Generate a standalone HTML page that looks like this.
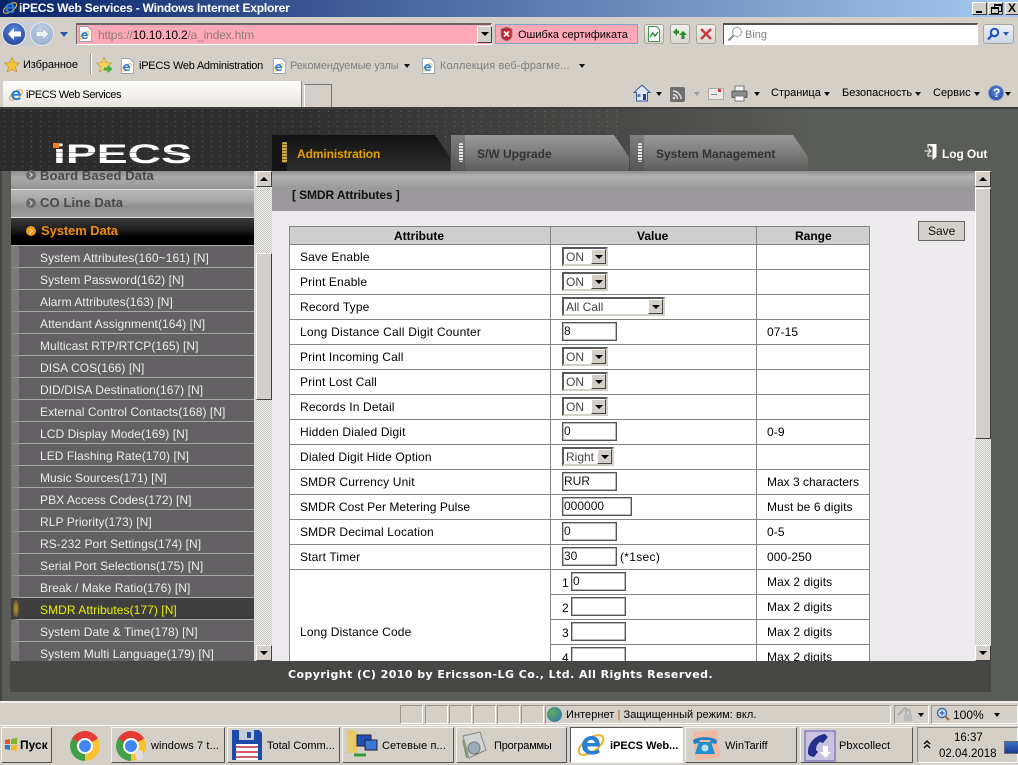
<!DOCTYPE html>
<html><head><meta charset="utf-8"><title>iPECS Web Services</title>
<style>
html,body{margin:0;padding:0;background:#d4d0c8}
#r{position:relative;width:1018px;height:765px;overflow:hidden;background:#d4d0c8;font:12px/14px "Liberation Sans","Noto Sans CJK SC",sans-serif;color:#000}
#r div,#r span.a,#r svg{position:absolute}
.t{position:absolute;white-space:nowrap;line-height:14px}
.g{color:#808080}
.c{font-size:11px}
.ar{width:0;height:0;border-left:3.5px solid transparent;border-right:3.5px solid transparent;border-top:4px solid #111}
.m{left:11px;width:227px;height:21px;padding-left:8px;background:#636163;border-left:8px solid #7b797b;border-bottom:1px solid #a8a8a8}
.m b{position:absolute;left:21px;top:5px;font-weight:normal;color:#eee;white-space:nowrap;line-height:14px;letter-spacing:.06px}
.l{color:#000;left:300px;letter-spacing:.15px}
.v{left:767px;letter-spacing:.1px}
.h{height:1px;left:289px;width:581px;background:#858585}
.sel{left:562px;width:42px;height:15px;background:#fff;border:2px solid;border-color:#5a5a5a #d4d0c8 #d4d0c8 #5a5a5a;box-sizing:content-box}
.sel i{position:absolute;left:2px;top:1px;font-style:normal;color:#444;line-height:15px}
.sel u{position:absolute;right:0;top:0;width:15px;height:15px;background:#d4d0c8;box-sizing:border-box;border:1px solid;border-color:#fff #444 #444 #fff}
.sel u:after{content:"";position:absolute;left:3px;top:5px;border-left:4px solid transparent;border-right:4px solid transparent;border-top:4px solid #000}
.inp{background:#fff;border:1px solid #555;box-shadow:inset 0 0 0 .5px #777;height:17px;line-height:17px;padding-left:1px;color:#111;box-sizing:content-box}
.btn3{width:16px;height:16px;background:#d4d0c8;box-sizing:border-box;border:1px solid;border-color:#fff #404040 #404040 #fff}
.up:after,.dn:after{content:"";position:absolute;left:3px;border-left:4px solid transparent;border-right:4px solid transparent}
.up:after{top:5px;border-bottom:4px solid #000}
.dn:after{top:5px;border-top:4px solid #000}
.trk{background-color:#eee;background-image:linear-gradient(45deg,#c8c6c0 25%,transparent 25%,transparent 75%,#c8c6c0 75%),linear-gradient(45deg,#c8c6c0 25%,transparent 25%,transparent 75%,#c8c6c0 75%);background-size:2px 2px;background-position:0 0,1px 1px}
.tb{top:727px;height:36px;background:#d4d0c8;box-sizing:border-box;border:1px solid;border-color:#f4f4f0 #555 #555 #f4f4f0}
.cell{top:705px;height:17px;width:21px;border:1px solid;border-color:#9a968e #fff #fff #9a968e}
.cb{width:20px;height:20px;top:24px;border:1px solid #a9a69e;border-radius:3px;background:linear-gradient(#f2f1ee,#d8d6d0);box-sizing:border-box}
.tab{top:135px;width:178px;height:36px;background:linear-gradient(#9a9a9a,#7c7c7c 50%,#5e5e5e);clip-path:polygon(0 0,163px 0,178px 22px,178px 36px,0 36px)}
.tabL{top:135px;width:14px;height:36px;background:linear-gradient(#808080,#555)}
.tt{top:147px;font-weight:bold;color:#333}
.dash{top:143px;width:4px;height:19px;border-radius:2px;background:repeating-linear-gradient(#e4e4e4 0 2px,#777 2px 3px)}
.chev{width:10px;height:10px;border-radius:50%;background:#6a6a6a}
.chev:after{content:"";position:absolute;left:2px;top:3px;width:3px;height:3px;border-top:1px solid #ddd;border-right:1px solid #ddd;transform:rotate(45deg)}
.chrome{border-radius:50%;background:conic-gradient(from 60deg,#fbc02d 0 120deg,#43a047 120deg 240deg,#e53935 240deg 360deg)}
.chrome:after{content:"";position:absolute;left:29%;top:29%;width:42%;height:42%;border-radius:50%;background:#4285f4;box-shadow:0 0 0 2px #fff}
</style></head>
<body><div id="r">
<svg width="0" height="0" style="left:0;top:0"><defs>
<symbol id="e" viewBox="0 0 20 20"><ellipse cx="10" cy="10" rx="9.5" ry="4.5" transform="rotate(-35 10 10)" fill="none" stroke="#e8b53a" stroke-width="1.4"/><path d="M4 10.500C4 6.500 7 4 10.500 4S16 6.500 16 11H7.500c.2 3.500 5 4 7.500 1.500l.8 2.300C12 18 4 16.500 4 10.500ZM7.500 8.700h5.200c-.3-2.700-4.700-2.900-5.200 0Z" fill="#2a7fd6"/></symbol>
<symbol id="p" viewBox="0 0 16 17"><path d="M1.500.5h9l4 4v12h-13z" fill="#fff" stroke="#9aa3ad"/><use href="#e" x="1" y="4" width="12" height="12"/></symbol>
</defs></svg>

<!-- title bar -->
<div style="left:0;top:0;width:1018px;height:17px;background:linear-gradient(90deg,#0a246a,#a6caf0)"></div>
<svg style="left:2px;top:0" width="16" height="16"><use href="#e" width="16" height="16"/></svg>
<div class="t" style="left:19px;top:1px;color:#fff;font-weight:bold;font-size:12px;letter-spacing:-.2px">iPECS Web Services - Windows Internet Explorer</div>
<div class="btn3" style="left:972px;top:2px;width:15px;height:13px"><div style="left:3px;top:8px;width:6px;height:2px;background:#000"></div></div>
<div class="btn3" style="left:988px;top:2px;width:15px;height:13px"><div style="left:5px;top:1px;width:6px;height:5px;border:1px solid #000;border-top-width:2px"></div><div style="left:2px;top:4px;width:6px;height:4px;border:1px solid #000;border-top-width:2px;background:#d4d0c8"></div></div>
<div class="btn3" style="left:1005px;top:2px;width:15px;height:13px"><div class="t" style="left:2px;top:-2px;font:bold 12px/14px 'Liberation Sans'">X</div></div>

<!-- address row -->
<div style="left:2px;top:22px;width:52px;height:24px;border-radius:12px;background:#c9cdd2"></div>
<div style="left:2px;top:22px;width:24px;height:24px;border-radius:50%;background:radial-gradient(circle at 50% 35%,#5a86d8,#1a3a90);border:1px solid #e5e8ee;box-sizing:border-box"></div>
<svg style="left:7px;top:27px" width="15" height="14"><path d="M7 1 1 7l6 6V9.500h7v-5H7z" fill="#fff"/></svg>
<div style="left:30px;top:22px;width:24px;height:24px;border-radius:50%;background:radial-gradient(circle at 50% 35%,#c6d4e8,#8fa6c6);border:1px solid #e5e8ee;box-sizing:border-box"></div>
<svg style="left:35px;top:27px" width="15" height="14"><path d="M8 1l6 6-6 6V9.500H1v-5h7z" fill="#eef1f6" stroke="#8fa0ba" stroke-width=".6"/></svg>
<div style="left:60px;top:32px;width:0;height:0;border-left:4px solid transparent;border-right:4px solid transparent;border-top:5px solid #2a5aa8"></div>

<div style="left:76px;top:23px;width:416px;height:22px;background:#ffa9b8;box-sizing:border-box;border:1px solid;border-color:#666 #fff #fff #666;border-top-width:2px"></div>
<svg style="left:78px;top:26px" width="15" height="16"><use href="#p" width="15" height="16"/></svg>
<div class="t" style="left:98px;top:28px;letter-spacing:-.18px"><span style="color:#8c7c80">https://</span>10.10.10.2<span style="color:#8c7c80">/a_index.htm</span></div>
<div class="btn3 dn" style="left:477px;top:26px;width:15px;height:17px"></div>

<div style="left:495px;top:24px;width:143px;height:20px;background:#ffa9b8;border:1px solid #7ea6c4;box-sizing:border-box"></div>
<svg style="left:499px;top:26px" width="15" height="16"><path d="M7.500 1 13 3v6c0 3-2.500 5-5.500 6C4.500 14 2 12 2 9V3z" fill="#c8202c" stroke="#888"/><path d="M5 5.500l5 5m0-5l-5 5" stroke="#fff" stroke-width="1.800"/></svg>
<div class="t c" style="left:518px;top:28px">Ошибка сертификата</div>

<div class="cb" style="left:644px"></div>
<svg style="left:647px;top:26px" width="14" height="16"><path d="M1.500.5h8l3 3v12h-11z" fill="#fff" stroke="#3d9a4a"/><path d="M3 11l3-4 2 3 3-4" fill="none" stroke="#2c8a3c" stroke-width="1.400"/></svg>
<div class="cb" style="left:670px"></div>
<svg style="left:672px;top:27px" width="16" height="14"><path d="M1 5l4-4v2.500h2v3H5V9zM15 8l-4-4-4 4h2.500v4h3V8z" fill="#2f8a2f"/></svg>
<div class="cb" style="left:696px"></div>
<svg style="left:700px;top:28px" width="12" height="12"><path d="M1 1l10 10M11 1 1 11" stroke="#c9383a" stroke-width="2.400"/></svg>

<div style="left:723px;top:23px;width:255px;height:22px;background:#fff;box-sizing:border-box;border:1px solid;border-color:#555 #fff #fff #555;border-top-width:2px"></div>
<svg style="left:727px;top:26px" width="16" height="16"><circle cx="10" cy="6" r="4.500" fill="#fff" stroke="#99a"/><path d="M6.500 9.500 1.500 14.500" stroke="#888" stroke-width="2"/></svg>
<div class="t g" style="left:745px;top:28px;font-size:11px">Bing</div>
<div class="cb" style="left:983px;width:31px;background:linear-gradient(#edf1f7,#ced6e2)"></div>
<svg style="left:986px;top:27px" width="14" height="14"><circle cx="8.500" cy="5.500" r="3.700" fill="none" stroke="#1b50c8" stroke-width="2"/><path d="M6 8 2 12.500" stroke="#1b50c8" stroke-width="2.400"/></svg>
<div style="left:1003px;top:32px;width:0;height:0;border-left:3.500px solid transparent;border-right:3.500px solid transparent;border-top:4px solid #2a5aa8"></div>

<!-- favorites row -->
<svg style="left:4px;top:57px" width="16" height="16"><path d="M8 .5l2.300 5 5.200.6-3.900 3.600 1.100 5.300L8 12.300 3.300 15l1.100-5.300L.5 6.100l5.200-.6z" fill="#f6c23c" stroke="#b98a20" stroke-width=".6"/></svg>
<div class="t c" style="left:23px;top:58px;letter-spacing:-.1px">Избранное</div>
<div style="left:90px;top:54px;width:1px;height:20px;background:#999;border-right:1px solid #fff"></div>
<svg style="left:96px;top:57px" width="17" height="17"><path d="M8 .5l2.300 5 5.200.6-3.900 3.600 1.100 5.300L8 12.300 3.300 15l1.100-5.300L.5 6.100l5.200-.6z" fill="#f6d25c" stroke="#b98a20" stroke-width=".6"/><path d="M8 10.500h4V8l4.500 4-4.500 4v-2.500H8z" fill="#3fae3f"/></svg>
<svg style="left:120px;top:58px" width="15" height="16"><use href="#p" width="15" height="16"/></svg>
<div class="t c" style="left:139px;top:59px;letter-spacing:-.25px">iPECS Web Administration</div>
<svg style="left:272px;top:58px" width="15" height="16"><use href="#p" width="15" height="16"/></svg>
<div class="t g c" style="left:290px;top:59px;letter-spacing:-.15px">Рекомендуемые узлы</div>
<div class="ar" style="left:404px;top:64px"></div>
<svg style="left:421px;top:58px" width="15" height="16"><use href="#p" width="15" height="16"/></svg>
<div class="t g c" style="left:440px;top:59px;letter-spacing:.1px">Коллекция веб-фрагме...</div>
<div class="ar" style="left:579px;top:64px"></div>

<!-- tab row -->
<div style="left:3px;top:81px;width:298px;height:27px;background:linear-gradient(#fff,#e6e3de);border-right:1px solid #888"></div>
<svg style="left:8px;top:87px" width="16" height="16"><use href="#e" width="16" height="16"/></svg>
<div class="t c" style="left:26px;top:88px;letter-spacing:-.45px">iPECS Web Services</div>
<div style="left:304px;top:84px;width:28px;height:24px;box-sizing:border-box;border:1px solid #777;border-bottom:0;border-left-color:#fff;background:#d4d0c8"></div>

<svg style="left:633px;top:84px" width="18" height="18"><path d="M9 1 1 8.500h2.500V17h11V8.500H17z" fill="#dfe8f2" stroke="#3158a8"/><rect x="10" y="10" width="3" height="6" fill="#22417f"/><rect x="4.500" y="10" width="3" height="3" fill="#4a80c8"/></svg>
<div class="ar" style="left:656px;top:92px"></div>
<div style="left:670px;top:87px;width:15px;height:15px;background:#6f6f6f;border-radius:2px"></div>
<svg style="left:670px;top:87px" width="15" height="15"><path d="M3 4c4 0 8 4 8 8M3 7.500c2.500 0 4.500 2 4.500 4.500" fill="none" stroke="#ddd" stroke-width="1.500"/><circle cx="4" cy="11" r="1.300" fill="#ddd"/></svg>
<div class="ar" style="left:694px;top:92px;border-top-color:#999"></div>
<div style="left:708px;top:88px;width:14px;height:10px;background:#eceae6;border:1px solid #aaa"></div>
<div style="left:718px;top:89px;width:3px;height:3px;background:#d33"></div>
<div style="left:711px;top:94px;width:6px;height:1px;background:#888"></div>
<svg style="left:731px;top:85px" width="17" height="17"><rect x="4" y="1" width="9" height="6" fill="#eee" stroke="#777"/><rect x="1" y="6" width="15" height="6.500" rx="1" fill="#8a8a8a" stroke="#555"/><rect x="4" y="11" width="9" height="5" fill="#fff" stroke="#777"/></svg>
<div class="ar" style="left:754px;top:92px"></div>
<div class="t c" style="left:771px;top:86px">Страница</div>
<div class="ar" style="left:824px;top:92px"></div>
<div class="t c" style="left:842px;top:86px">Безопасность</div>
<div class="ar" style="left:915px;top:92px"></div>
<div class="t c" style="left:933px;top:86px">Сервис</div>
<div class="ar" style="left:974px;top:92px"></div>
<div style="left:988px;top:85px;width:16px;height:16px;border-radius:50%;background:radial-gradient(circle at 50% 40%,#5a8ae0,#1d3c9a);border:1px solid #8899bb;box-sizing:border-box"></div>
<div class="t" style="left:993px;top:86px;color:#fff;font-weight:bold">?</div>
<div class="ar" style="left:1005px;top:92px"></div>

<!-- page -->
<div style="left:0;top:107px;width:1018px;height:594px;background:#5a5c58"></div>
<div style="left:0;top:107px;width:1018px;height:2px;background:#3e3e3e"></div>
<div style="left:0;top:109px;width:1018px;height:62px;background:linear-gradient(90deg,#2c2c2c 0,#2f2f2f 30%,#4a4b49 62%,#5a5c58 80%)"></div>
<div style="left:0;top:109px;width:620px;height:62px;opacity:.3;background-image:radial-gradient(#aaa .7px,transparent 1px);background-size:9px 5px"></div>
<div style="left:0;top:171px;width:11px;height:490px;background:#5a5c58"></div>
<div style="left:0;top:171px;width:2px;height:530px;background:#454644"></div>

<svg style="left:50px;top:138px" width="146" height="30"><text x="3" y="25" font-family="Liberation Sans" font-weight="bold" font-size="27" fill="#fff" textLength="139" lengthAdjust="spacingAndGlyphs">iPECS</text><path d="M0 14.500h146M0 19.500h146" stroke="#2c2c2c" stroke-width=".8" opacity=".5"/><rect x="3" y="5" width="6" height="5" fill="#f47a1f"/></svg>

<!-- tabs -->
<div class="tab" style="left:272px;background:linear-gradient(#111,#2e2f2e)"></div>
<div style="left:272px;top:135px;width:15px;height:36px;background:#141414"></div>
<div style="left:282px;top:142px;width:5px;height:21px;background:repeating-linear-gradient(#d0a840 0 2px,#7a6024 2px 3px);border-radius:2px"></div>
<div class="t" style="left:297px;top:147px;color:#e8a000;font-weight:bold;letter-spacing:-.1px">Administration</div>
<div class="tab" style="left:451px"></div><div class="tabL" style="left:451px"></div>
<div class="dash" style="left:459px"></div>
<div class="t tt" style="left:477px">S/W Upgrade</div>
<div class="tab" style="left:630px"></div><div class="tabL" style="left:630px"></div>
<div class="dash" style="left:638px"></div>
<div class="t tt" style="left:656px">System Management</div>
<svg style="left:924px;top:143px" width="14" height="18"><path d="M4 1h8.500v13l-4 3V4L4 2z" fill="#fff"/><path d="M4 1v4M4 10v3h4" fill="none" stroke="#fff"/><path d="M.5 8h6M4.500 5.500l2.300 2.500-2.300 2.500" fill="none" stroke="#fff"/></svg>
<div class="t" style="left:942px;top:147px;color:#fff;font-weight:bold;letter-spacing:-.1px">Log Out</div>

<!-- sidebar -->
<div style="left:11px;top:171px;width:243px;height:18px;background:linear-gradient(#8e8e8e,#a8a8a8 35%,#a2a2a2 65%,#8f8f8f)"></div>
<div style="left:11px;top:189px;width:243px;height:1px;background:#e0e0e0"></div>
<div style="left:11px;top:190px;width:243px;height:27px;background:linear-gradient(#b8b8b8,#a5a5a5 40%,#8f8f8f 60%,#9c9c9c)"></div>
<div style="left:11px;top:217px;width:243px;height:1px;background:#ddd"></div>
<div style="left:11px;top:218px;width:243px;height:27px;background:linear-gradient(#3a3a3a,#1c1c1c 45%,#000 70%,#000)"></div>
<div class="chev" style="left:26px;top:170px"></div>
<div class="t" style="left:40px;top:169px;font-size:13px;font-weight:bold;color:#4a4a4a;letter-spacing:.12px">Board Based Data</div>
<div class="chev" style="left:26px;top:198px"></div>
<div class="t" style="left:40px;top:196px;font-size:13px;font-weight:bold;color:#4a4a4a;letter-spacing:.12px">CO Line Data</div>
<div class="chev" style="left:26px;top:226px;background:#e89a10"></div>
<div class="t" style="left:41px;top:224px;font-size:13px;font-weight:bold;color:#f08a10;letter-spacing:-.1px">System Data</div>
<div style="left:11px;top:245px;width:243px;height:1px;background:#a8a8a8"></div>

<div class="m" style="top:246px"><b>System Attributes(160~161) [N]</b></div>
<div class="m" style="top:268px"><b>System Password(162) [N]</b></div>
<div class="m" style="top:290px"><b>Alarm Attributes(163) [N]</b></div>
<div class="m" style="top:312px"><b>Attendant Assignment(164) [N]</b></div>
<div class="m" style="top:334px"><b>Multicast RTP/RTCP(165) [N]</b></div>
<div class="m" style="top:356px"><b>DISA COS(166) [N]</b></div>
<div class="m" style="top:378px"><b>DID/DISA Destination(167) [N]</b></div>
<div class="m" style="top:400px"><b>External Control Contacts(168) [N]</b></div>
<div class="m" style="top:422px"><b>LCD Display Mode(169) [N]</b></div>
<div class="m" style="top:444px"><b>LED Flashing Rate(170) [N]</b></div>
<div class="m" style="top:466px"><b>Music Sources(171) [N]</b></div>
<div class="m" style="top:488px"><b>PBX Access Codes(172) [N]</b></div>
<div class="m" style="top:510px"><b>RLP Priority(173) [N]</b></div>
<div class="m" style="top:532px"><b>RS-232 Port Settings(174) [N]</b></div>
<div class="m" style="top:554px"><b>Serial Port Selections(175) [N]</b></div>
<div class="m" style="top:576px"><b>Break / Make Ratio(176) [N]</b></div>
<div class="m" style="top:598px;background:#3f3f3f;border-left-color:#3f3f3f"><b style="color:#e8f000">SMDR Attributes(177) [N]</b></div>
<div style="left:13px;top:600px;width:6px;height:17px;border-radius:50%;background:radial-gradient(#c89a20,#3f3f3f)"></div>
<div class="m" style="top:620px"><b>System Date &amp; Time(178) [N]</b></div>
<div class="m" style="top:642px"><b>System Multi Language(179) [N]</b></div>

<!-- sidebar scrollbar -->
<div class="trk" style="left:254px;top:171px;width:18px;height:490px"></div>
<div class="btn3 up" style="left:256px;top:171px"></div>
<div class="btn3" style="left:256px;top:253px;height:147px"></div>
<div class="btn3 dn" style="left:256px;top:645px"></div>

<!-- main -->
<div style="left:272px;top:171px;width:703px;height:490px;background:#eeebee"></div>
<div style="left:272px;top:171px;width:703px;height:40px;background:linear-gradient(#8e8e8e,#b5b5b5 14%,#a5a5a5 30%,#9b999b 42%,#9b999b)"></div>
<div class="t" style="left:292px;top:188px;font-weight:bold;color:#111;letter-spacing:-.1px">[ SMDR Attributes ]</div>
<div style="left:918px;top:221px;width:47px;height:20px;box-sizing:border-box;background:#d4d0c8;border:1px solid #666"></div>
<div class="t" style="left:928px;top:224px;color:#111">Save</div>

<!-- table -->
<div style="left:289px;top:226px;width:581px;height:435px;background:#fff"></div>
<div style="left:289px;top:226px;width:581px;height:18px;background:#cecece"></div>
<div class="t" style="left:394px;top:229px;font-weight:bold">Attribute</div>
<div class="t" style="left:637px;top:229px;font-weight:bold">Value</div>
<div class="t" style="left:795px;top:229px;font-weight:bold">Range</div>
<div class="h" style="top:226px"></div><div class="h" style="top:244px"></div><div class="h" style="top:269px"></div><div class="h" style="top:294px"></div><div class="h" style="top:319px"></div><div class="h" style="top:344px"></div><div class="h" style="top:369px"></div><div class="h" style="top:394px"></div><div class="h" style="top:419px"></div><div class="h" style="top:444px"></div><div class="h" style="top:469px"></div><div class="h" style="top:494px"></div><div class="h" style="top:519px"></div><div class="h" style="top:544px"></div><div class="h" style="top:569px"></div>
<div class="h" style="top:594px;left:550px;width:320px"></div><div class="h" style="top:619px;left:550px;width:320px"></div><div class="h" style="top:644px;left:550px;width:320px"></div>
<div style="left:289px;top:226px;width:1px;height:435px;background:#858585"></div>
<div style="left:550px;top:226px;width:1px;height:435px;background:#858585"></div>
<div style="left:756px;top:226px;width:1px;height:435px;background:#858585"></div>
<div style="left:869px;top:226px;width:1px;height:435px;background:#858585"></div>

<div class="t l" style="top:250px">Save Enable</div>
<div class="t l" style="top:275px">Print Enable</div>
<div class="t l" style="top:300px">Record Type</div>
<div class="t l" style="top:325px;letter-spacing:.22px">Long Distance Call Digit Counter</div>
<div class="t l" style="top:350px">Print Incoming Call</div>
<div class="t l" style="top:375px">Print Lost Call</div>
<div class="t l" style="top:400px">Records In Detail</div>
<div class="t l" style="top:425px">Hidden Dialed Digit</div>
<div class="t l" style="top:450px">Dialed Digit Hide Option</div>
<div class="t l" style="top:475px">SMDR Currency Unit</div>
<div class="t l" style="top:500px;letter-spacing:.05px">SMDR Cost Per Metering Pulse</div>
<div class="t l" style="top:525px">SMDR Decimal Location</div>
<div class="t l" style="top:550px">Start Timer</div>
<div class="t l" style="top:625px">Long Distance Code</div>

<div class="sel" style="top:247px"><i>ON</i><u></u></div>
<div class="sel" style="top:272px"><i>ON</i><u></u></div>
<div class="sel" style="top:297px;width:99px"><i>All Call</i><u></u></div>
<div class="inp" style="left:562px;top:322px;width:52px">8</div>
<div class="sel" style="top:347px"><i>ON</i><u></u></div>
<div class="sel" style="top:372px"><i>ON</i><u></u></div>
<div class="sel" style="top:397px"><i>ON</i><u></u></div>
<div class="inp" style="left:562px;top:422px;width:52px">0</div>
<div class="sel" style="top:447px;width:48px"><i>Right</i><u></u></div>
<div class="inp" style="left:562px;top:472px;width:52px">RUR</div>
<div class="inp" style="left:562px;top:497px;width:67px">000000</div>
<div class="inp" style="left:562px;top:522px;width:52px">0</div>
<div class="inp" style="left:562px;top:547px;width:52px">30</div>
<div class="t" style="left:620px;top:550px;letter-spacing:.3px">(*1sec)</div>

<div class="t" style="left:562px;top:576px">1</div><div class="inp" style="left:571px;top:572px;width:52px">0</div>
<div class="t" style="left:562px;top:601px">2</div><div class="inp" style="left:571px;top:597px;width:52px"></div>
<div class="t" style="left:562px;top:626px">3</div><div class="inp" style="left:571px;top:622px;width:52px"></div>
<div class="t" style="left:562px;top:651px">4</div><div class="inp" style="left:571px;top:647px;width:52px"></div>

<div class="t v" style="top:325px">07-15</div>
<div class="t v" style="top:425px">0-9</div>
<div class="t v" style="top:475px;letter-spacing:0">Max 3 characters</div>
<div class="t v" style="top:500px">Must be 6 digits</div>
<div class="t v" style="top:525px">0-5</div>
<div class="t v" style="top:550px">000-250</div>
<div class="t v" style="top:575px">Max 2 digits</div>
<div class="t v" style="top:600px">Max 2 digits</div>
<div class="t v" style="top:625px">Max 2 digits</div>
<div class="t v" style="top:650px">Max 2 digits</div>

<!-- main scrollbar -->
<div class="trk" style="left:975px;top:171px;width:16px;height:490px"></div>
<div class="btn3 up" style="left:975px;top:171px"></div>
<div class="btn3" style="left:975px;top:188px;height:251px"></div>
<div class="btn3 dn" style="left:975px;top:645px"></div>

<!-- footer -->
<div style="left:10px;top:661px;width:981px;height:31px;background:#474846"></div>
<div class="t" style="left:288px;top:668px;color:#fff;font:bold 11px/14px 'DejaVu Sans',sans-serif;letter-spacing:.43px">Copyright (C) 2010 by Ericsson-LG Co., Ltd. All Rights Reserved.</div>

<!-- status bar -->
<div style="left:0;top:701px;width:1018px;height:2px;background:#f0efec"></div>
<div style="left:0;top:703px;width:1018px;height:22px;background:#d4d0c8"></div>
<div class="cell" style="left:400px"></div><div class="cell" style="left:425px"></div><div class="cell" style="left:449px"></div><div class="cell" style="left:473px"></div><div class="cell" style="left:497px"></div><div class="cell" style="left:521px"></div>
<div class="cell" style="left:545px;width:344px"></div>
<div class="cell" style="left:894px;width:33px"></div>
<div class="cell" style="left:931px;width:85px"></div>
<div style="left:547px;top:707px;width:15px;height:15px;border-radius:50%;background:radial-gradient(circle at 35% 35%,#5fae5a,#2a6ac0)"></div>
<div class="t c" style="left:566px;top:708px;letter-spacing:.05px">Интернет <span style="color:#b06010">|</span> Защищенный режим: вкл.</div>
<svg style="left:897px;top:707px" width="18" height="15"><path d="M1 8 8 1l3 3" fill="none" stroke="#aaa" stroke-width="2"/><rect x="7" y="7" width="8" height="7" fill="#bbb"/><path d="M9 7V4.500a2 2 0 0 1 4 0V7" fill="none" stroke="#aaa" stroke-width="1.500"/></svg>
<div class="ar" style="left:918px;top:713px"></div>
<svg style="left:936px;top:707px" width="14" height="15"><circle cx="6" cy="6" r="4.500" fill="#dce8f8" stroke="#3a6ab0" stroke-width="1.400"/><path d="M6 3.500v5M3.500 6h5" stroke="#2a5ab0" stroke-width="1.300"/><path d="M9.500 9.500l3.500 3.500" stroke="#a06a20" stroke-width="2"/></svg>
<div class="t" style="left:953px;top:708px">100%</div>
<div class="ar" style="left:994px;top:713px"></div>

<!-- taskbar -->
<div style="left:0;top:725px;width:1018px;height:40px;background:#d4d0c8;border-top:1px solid #f4f4f0;box-sizing:border-box"></div>
<div class="tb" style="left:1px;width:51px"></div>
<svg style="left:4px;top:738px" width="15" height="14"><path d="M1 2l5-1v5H1z" fill="#e8502a"/><path d="M7 1l6-1v6H7z" fill="#7cb52c"/><path d="M1 7h5v5l-5-1z" fill="#2e78c8"/><path d="M7 7h6v6l-6-1z" fill="#f2b92c"/></svg>
<div class="t" style="left:20px;top:738px;font-weight:bold">Пуск</div>
<div class="chrome" style="left:70px;top:731px;width:30px;height:30px"></div>
<div class="tb" style="left:111px;width:114px"></div>
<div class="chrome" style="left:116px;top:731px;width:30px;height:30px"></div>
<div style="left:135px;top:750px;width:8px;height:10px;background:#ddd;border-radius:3px"></div>
<div class="t c" style="left:151px;top:739px;letter-spacing:.1px">windows 7 t...</div>
<div class="tb" style="left:227px;width:113px"></div>
<svg style="left:231px;top:729px" width="32" height="32"><path d="M1 1h27l3 3v27H1z" fill="#1c4aa8"/><rect x="8" y="1" width="15" height="10" fill="#c8ccd4"/><rect x="16" y="3" width="4" height="6" fill="#1c4aa8"/><rect x="5" y="15" width="22" height="16" fill="#fff"/><path d="M5 18h22M5 23h22M5 28h22" stroke="#c8283c" stroke-width="1.500"/></svg>
<div class="t c" style="left:267px;top:739px">Total Comm...</div>
<div class="tb" style="left:342px;width:112px"></div>
<svg style="left:346px;top:729px" width="32" height="32"><path d="M1 1h8l2 3v20H1z" fill="#e8c868"/><rect x="11" y="6" width="14" height="11" fill="#2050b8" stroke="#223"/><rect x="19" y="11" width="12" height="10" fill="#3a78d8" stroke="#223"/><path d="M8 26h12" stroke="#2e9a3a" stroke-width="3"/></svg>
<div class="t c" style="left:382px;top:739px;letter-spacing:.1px">Сетевые п...</div>
<div class="tb" style="left:456px;width:111px"></div>
<svg style="left:460px;top:730px" width="28" height="30"><path d="M3 6 20 2l6 18-17 8z" fill="#cfd4d0" stroke="#888"/><circle cx="14" cy="18" r="6" fill="#9ab" stroke="#777"/><path d="M3 10l4 18" stroke="#7a9a70" stroke-width="2"/></svg>
<div class="t c" style="left:494px;top:739px;letter-spacing:-.2px">Программы</div>
<div class="tb" style="left:570px;width:113px;background:#fff;border-color:#555 #f4f4f0 #f4f4f0 #555"></div>
<svg style="left:576px;top:730px" width="30" height="30"><use href="#e" width="30" height="30"/></svg>
<div class="t c" style="left:610px;top:739px;font-weight:bold">iPECS Web...</div>
<div class="tb" style="left:685px;width:112px"></div>
<svg style="left:690px;top:729px" width="32" height="32"><path d="M3 3l24-2 3 28-24 2z" fill="#f0b8a0"/><path d="M3 12C4 7 26 7 27 12l-1 3-5-1-1-3H10l-1 3-5 1z" fill="#2080c8"/><path d="M9 13h12l4 12H5z" fill="#2090d0"/><circle cx="15" cy="19" r="3.500" fill="#bde"/></svg>
<div class="t c" style="left:725px;top:739px">WinTariff</div>
<div class="tb" style="left:800px;width:113px"></div>
<div style="left:804px;top:730px;width:32px;height:32px;box-sizing:border-box;background:#c8c4e0;border:2px solid #9a90c8"></div>
<svg style="left:806px;top:732px" width="28" height="28"><path d="M2 22C1 12 9 3 19 2l3 3-5 6-3-1c-3 2-4 5-4 8l2 2-4 5-4-1z" fill="#24308c"/><path d="M17 14h5v6h3l-5.500 6L14 20h3z" fill="#fff"/></svg>
<div class="t c" style="left:839px;top:739px;letter-spacing:.1px">Pbxcollect</div>
<div style="left:917px;top:727px;width:101px;height:36px;box-sizing:border-box;border:1px solid;border-color:#888 #fff #fff #888"></div>
<svg style="left:923px;top:740px" width="8" height="9"><path d="M1 4l3-3 3 3M1 8l3-3 3 3" fill="none" stroke="#000" stroke-width="1.300"/></svg>
<div class="t" style="left:954px;top:731px;font-size:11.500px">16:37</div>
<div class="t" style="left:939px;top:747px;font-size:11.500px">02.04.2018</div>
<div style="left:1004px;top:741px;width:14px;height:11px;background:linear-gradient(#3b6fc8,#1a3a90);border:1px solid #667"></div>
</div></body></html>
